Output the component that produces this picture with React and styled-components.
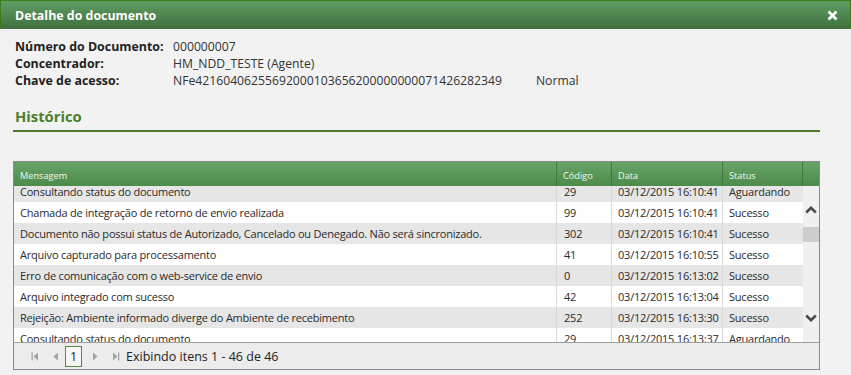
import React, { useLayoutEffect, useRef } from 'react';
import styled, { createGlobalStyle } from 'styled-components';

const GlobalStyle = createGlobalStyle`
  html, body {
    margin: 0;
    padding: 0;
    background: #f2f2f2;
  }
  body {
    font-family: 'Open Sans', 'Noto Sans', sans-serif;
    color: #222;
  }
`;

const rows = [
  { msg: 'Consultando status do documento', code: '29', date: '03/12/2015 16:10:41', status: 'Aguardando' },
  { msg: 'Chamada de integração de retorno de envio realizada', code: '99', date: '03/12/2015 16:10:41', status: 'Sucesso' },
  { msg: 'Documento não possui status de Autorizado, Cancelado ou Denegado. Não será sincronizado.', code: '302', date: '03/12/2015 16:10:41', status: 'Sucesso' },
  { msg: 'Arquivo capturado para processamento', code: '41', date: '03/12/2015 16:10:55', status: 'Sucesso' },
  { msg: 'Erro de comunicação com o web-service de envio', code: '0', date: '03/12/2015 16:13:02', status: 'Sucesso' },
  { msg: 'Arquivo integrado com sucesso', code: '42', date: '03/12/2015 16:13:04', status: 'Sucesso' },
  { msg: 'Rejeição: Ambiente informado diverge do Ambiente de recebimento', code: '252', date: '03/12/2015 16:13:30', status: 'Sucesso' },
  { msg: 'Consultando status do documento', code: '29', date: '03/12/2015 16:13:37', status: 'Aguardando' },
];

const Dialog = styled.div`
  display: flex;
  flex-direction: column;
  width: 851px;
  height: 375px;
  overflow: hidden;
`;

const TitleBar = styled.div`
  display: flex;
  align-items: center;
  justify-content: space-between;
  height: 28px;
  padding: 0 12px 0 14px;
  border-top: 1px solid #3d7a1c;
  border-left: 1px solid #3d7a1c;
  border-right: 1px solid #3d7a1c;
  box-sizing: content-box;
  background: linear-gradient(#5e9e62, #3f6f3e);
  color: #fff;
  font-weight: 700;
  font-size: 12.4px;
`;

const CloseButton = styled.span`
  display: flex;
  width: 11px;
  height: 11px;
`;

const Content = styled.div`
  padding: 9px 31px 0 13px;
`;

const InfoList = styled.div`
  display: grid;
  grid-template-columns: 158px auto 1fr;
  padding-left: 2px;
  font-size: 12.4px;
  line-height: 17px;
`;

const Label = styled.span`
  font-weight: 700;
`;

const Value = styled.span`
  color: #333;
  font-size: 12.2px;
`;

const Extra = styled.span`
  color: #333;
  padding-left: 34px;
  font-size: 12.2px;
`;

const SectionTitle = styled.h2`
  margin: 17px 0 0;
  padding: 0 0 4px 2px;
  border-bottom: 2px solid #4b7b2a;
  color: #4b7f2b;
  font-size: 14.8px;
  line-height: 20px;
  font-weight: 700;
`;

const Grid = styled.div`
  margin-top: 29px;
  border: 1px solid #8a8a8a;
  display: flex;
  flex-direction: column;
`;

const cols = '543px 55px 111px 80px 1fr';

const HeaderRow = styled.div`
  display: grid;
  grid-template-columns: ${cols};
  height: 24px;
  background: linear-gradient(#66a468, #4d8b4b);
`;

const HeaderCell = styled.div`
  display: flex;
  align-items: center;
  padding: 2px 0 0 6px;
  border-right: 1px solid ${(p) => (p.last ? 'transparent' : '#3f7a3c')};
  color: #f2f7ee;
  font-size: 9.2px;
`;

const BodyWrap = styled.div`
  display: flex;
  height: 156px;
`;

const Rows = styled.div`
  flex: 0 0 789px;
  overflow: hidden;
`;

const Row = styled.div`
  display: grid;
  grid-template-columns: 543px 55px 111px 80px;
  height: 21px;
  background: ${(p) => (p.alt ? '#e6e6e6' : '#ffffff')};
`;

const Cell = styled.div`
  display: flex;
  align-items: center;
  padding-left: ${(p) => p.pad || 6}px;
  border-right: 1px solid ${(p) => (p.last ? 'transparent' : '#d9d9d9')};
  font-size: 11px;
  letter-spacing: -0.22px;
  color: #2a2a2a;
  white-space: nowrap;
  overflow: hidden;
`;

const ScrollTrack = styled.div`
  flex: 1;
  display: flex;
  flex-direction: column;
  padding: 14px 0;
  background: #f0f0f0;
`;

const ScrollArrow = styled.div`
  display: flex;
  align-items: center;
  justify-content: center;
  height: 20px;
`;

const ScrollThumb = styled.div`
  margin-top: 7px;
  height: 15px;
  background: #cdcdcd;
`;

const Spacer = styled.div`
  flex: 1;
`;

const Pager = styled.div`
  display: flex;
  align-items: center;
  height: 26px;
  padding-left: 11px;
  border-top: 1px solid #a0a0a0;
  background: #ececec;
  font-size: 12.5px;
  color: #222;
`;

const PagerIcon = styled.span`
  display: flex;
  align-items: center;
  justify-content: center;
  width: 20px;
  height: 20px;
`;

const PageBox = styled.span`
  display: flex;
  align-items: center;
  justify-content: center;
  width: 15px;
  height: 19px;
  margin: 0 4px 0 0;
  border: 1px solid #4f8f3a;
  background: #f7f7f7;
  font-size: 12.5px;
`;

const Chevron = ({ down }) => (
  <svg width="12" height="8" viewBox="0 0 12 8">
    <polyline
      points={down ? '1.2,1.5 6,6.2 10.8,1.5' : '1.2,6.5 6,1.8 10.8,6.5'}
      fill="none"
      stroke="#4a4a4a"
      strokeWidth="2.6"
    />
  </svg>
);

const Tri = ({ dir, bar }) => (
  <svg width="8" height="9" viewBox="0 0 8 9">
    {dir === 'left' ? (
      <polygon points="7,0.5 7,8.5 2.5,4.5" fill="#a3a3a3" />
    ) : (
      <polygon points="1,0.5 1,8.5 5.5,4.5" fill="#a3a3a3" />
    )}
    {bar && <rect x={dir === 'left' ? 0.5 : 6} y="0.5" width="1.3" height="8" fill="#a3a3a3" />}
  </svg>
);

const App = () => {
  const bodyRef = useRef(null);

  useLayoutEffect(() => {
    if (bodyRef.current) bodyRef.current.scrollTop = 5;
  }, []);

  return (
    <Dialog>
      <GlobalStyle />
      <TitleBar>
        <span>Detalhe do documento</span>
        <CloseButton>
          <svg width="11" height="11" viewBox="0 0 11 11">
            <path d="M1.5 1.5 L9.5 9.5 M9.5 1.5 L1.5 9.5" stroke="#fff" strokeWidth="2.6" />
          </svg>
        </CloseButton>
      </TitleBar>

      <Content>
        <InfoList>
          <Label>Número do Documento:</Label>
          <Value>000000007</Value>
          <span />
          <Label>Concentrador:</Label>
          <Value>HM_NDD_TESTE (Agente)</Value>
          <span />
          <Label>Chave de acesso:</Label>
          <Value>NFe42160406255692000103656200000000071426282349</Value>
          <Extra>Normal</Extra>
        </InfoList>

        <SectionTitle>Histórico</SectionTitle>

        <Grid>
          <HeaderRow>
            <HeaderCell>Mensagem</HeaderCell>
            <HeaderCell>Código</HeaderCell>
            <HeaderCell>Data</HeaderCell>
            <HeaderCell>Status</HeaderCell>
            <HeaderCell last />
          </HeaderRow>

          <BodyWrap>
            <Rows ref={bodyRef}>
              {rows.map((r, i) => (
                <Row key={i} alt={i % 2 === 0}>
                  <Cell>{r.msg}</Cell>
                  <Cell pad={7}>{r.code}</Cell>
                  <Cell>{r.date}</Cell>
                  <Cell last>{r.status}</Cell>
                </Row>
              ))}
              <Row />
            </Rows>
            <ScrollTrack>
              <ScrollArrow>
                <Chevron />
              </ScrollArrow>
              <ScrollThumb />
              <Spacer />
              <ScrollArrow>
                <Chevron down />
              </ScrollArrow>
            </ScrollTrack>
          </BodyWrap>

          <Pager>
            <PagerIcon>
              <Tri dir="left" bar />
            </PagerIcon>
            <PagerIcon>
              <Tri dir="left" />
            </PagerIcon>
            <PageBox>1</PageBox>
            <PagerIcon>
              <Tri dir="right" />
            </PagerIcon>
            <PagerIcon>
              <Tri dir="right" bar />
            </PagerIcon>
            <span>Exibindo itens 1 - 46 de 46</span>
          </Pager>
        </Grid>
      </Content>
    </Dialog>
  );
};

export default App;
